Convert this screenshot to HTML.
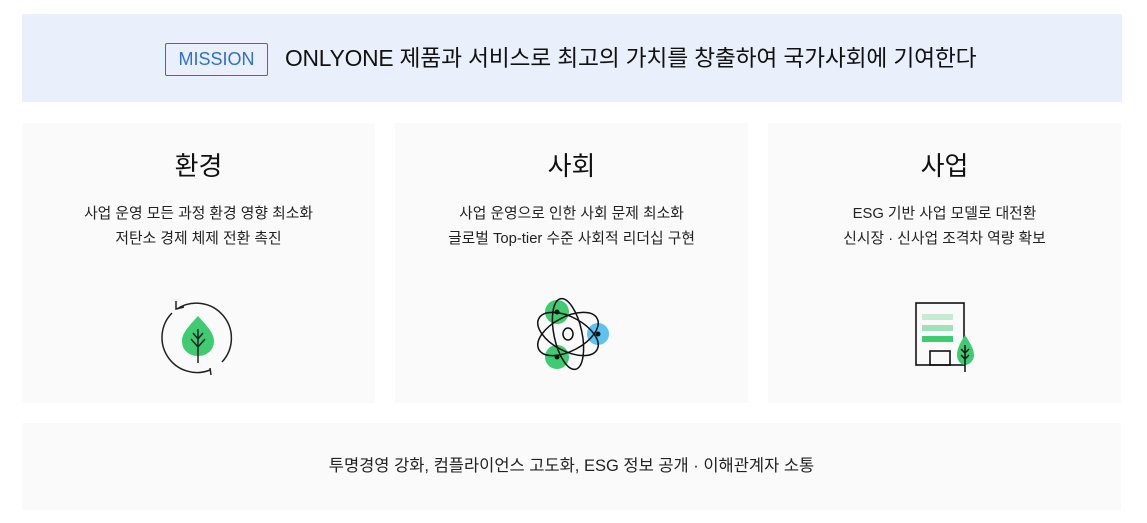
<!DOCTYPE html>
<html><head><meta charset="utf-8"><style>
body{margin:0;background:#fff;width:1147px;height:523px;position:relative;font-family:"Liberation Sans","Noto Sans CJK KR",sans-serif;color:#111;overflow:hidden}
.top{position:absolute;left:22px;top:14px;width:1100px;height:88px;background:#e9f0fb}
.badge{position:absolute;left:165px;top:43px;width:103px;height:33px;box-sizing:border-box;border:1px solid #2f6fd1;border-radius:2px;color:#2f6fd1;font-size:18px;line-height:31px;text-align:center}
.mt{position:absolute;left:285px;top:42px;font-size:22.8px;line-height:32px;letter-spacing:-0.2px}
.card{position:absolute;top:123px;width:353px;height:280px;background:#fafafa;text-align:center}
.card h2{margin:0;position:absolute;top:26px;width:100%;font-size:26px;font-weight:normal;line-height:34px}
.card p{margin:0;position:absolute;top:79px;width:100%;font-size:14.8px;line-height:25px;color:#222}
svg{position:absolute}
.bot{position:absolute;left:22px;top:423px;width:1099px;height:87px;background:#fafafa;text-align:center;font-size:16.5px;line-height:87px;color:#222}
</style></head><body>
<div class="top"></div>
<div class="badge">MISSION</div>
<div class="mt">ONLYONE 제품과 서비스로 최고의 가치를 창출하여 국가사회에 기여한다</div>

<div class="card" style="left:22px"><h2>환경</h2><p>사업 운영 모든 과정 환경 영향 최소화<br>저탄소 경제 체제 전환 촉진</p></div>
<div class="card" style="left:395px"><h2>사회</h2><p>사업 운영으로 인한 사회 문제 최소화<br>글로벌 Top-tier 수준 사회적 리더십 구현</p></div>
<div class="card" style="left:768px"><h2>사업</h2><p>ESG 기반 사업 모델로 대전환<br>신시장 · 신사업 조격차 역량 확보</p></div>

<svg style="left:158px;top:297px" width="80" height="80" viewBox="0 0 80 80">
<path d="M19 12 A35 35 0 0 1 64 65" fill="none" stroke="#222" stroke-width="1.5"/>
<path d="M14 16 A35 35 0 0 0 52 73" fill="none" stroke="#222" stroke-width="1.5"/>
<path d="M18 4 L18 12 L26 10" fill="none" stroke="#222" stroke-width="1.5"/>
<path d="M52 71 L53 78" fill="none" stroke="#222" stroke-width="1.5"/>
<path d="M40 19 C31 29 24 36 24 44 C24 53 31 59 40 59 C49 59 56 53 56 44 C56 36 49 29 40 19Z" fill="#3ecb72"/>
<path d="M40 32 V66 M35 36 L40 42 L45 36 M33 42 L40 50 L47 42" fill="none" stroke="#222" stroke-width="1.5"/>
</svg>

<svg style="left:518px;top:284px" width="100" height="100" viewBox="0 0 100 100">
<circle cx="39" cy="28" r="12" fill="#3ecb72"/>
<circle cx="39" cy="73" r="12" fill="#3ecb72"/>
<circle cx="80" cy="50" r="11" fill="#5bc2f2"/>
<g fill="none" stroke="#111" stroke-width="1.5" transform="translate(50,50)">
<ellipse rx="33" ry="17" transform="rotate(28)"/>
<ellipse rx="33" ry="17" transform="rotate(-28)"/>
<ellipse rx="36" ry="14" transform="rotate(78)"/>
<ellipse rx="5" ry="6"/>
</g>
<circle cx="39" cy="28" r="2.5" fill="#111"/><circle cx="39" cy="73" r="2.5" fill="#111"/><circle cx="80" cy="50" r="2.5" fill="#111"/>
</svg>

<svg style="left:910px;top:298px" width="75" height="80" viewBox="0 0 75 80">
<rect x="6" y="5" width="48" height="62" fill="none" stroke="#111" stroke-width="1.6"/>
<rect x="12" y="16" width="31" height="6" fill="#c4ebd3"/>
<rect x="12" y="27" width="31" height="6" fill="#9fe2b8"/>
<rect x="12" y="38" width="31" height="6" fill="#3ecb72"/>
<rect x="20" y="53" width="20" height="14" fill="none" stroke="#111" stroke-width="1.6"/>
<path d="M55 37 C50 45 47 51 47 57 C47 63 51 67 55 67 C59 67 64 63 64 57 C64 51 60 45 55 37Z" fill="#3ecb72"/>
<path d="M55 47 V74 M51 51 L55 55 L59 51 M51 57 L55 61 L59 57" fill="none" stroke="#111" stroke-width="1.5"/>
</svg>

<div class="bot">투명경영 강화, 컴플라이언스 고도화, ESG 정보 공개 · 이해관계자 소통</div>
</body></html>
